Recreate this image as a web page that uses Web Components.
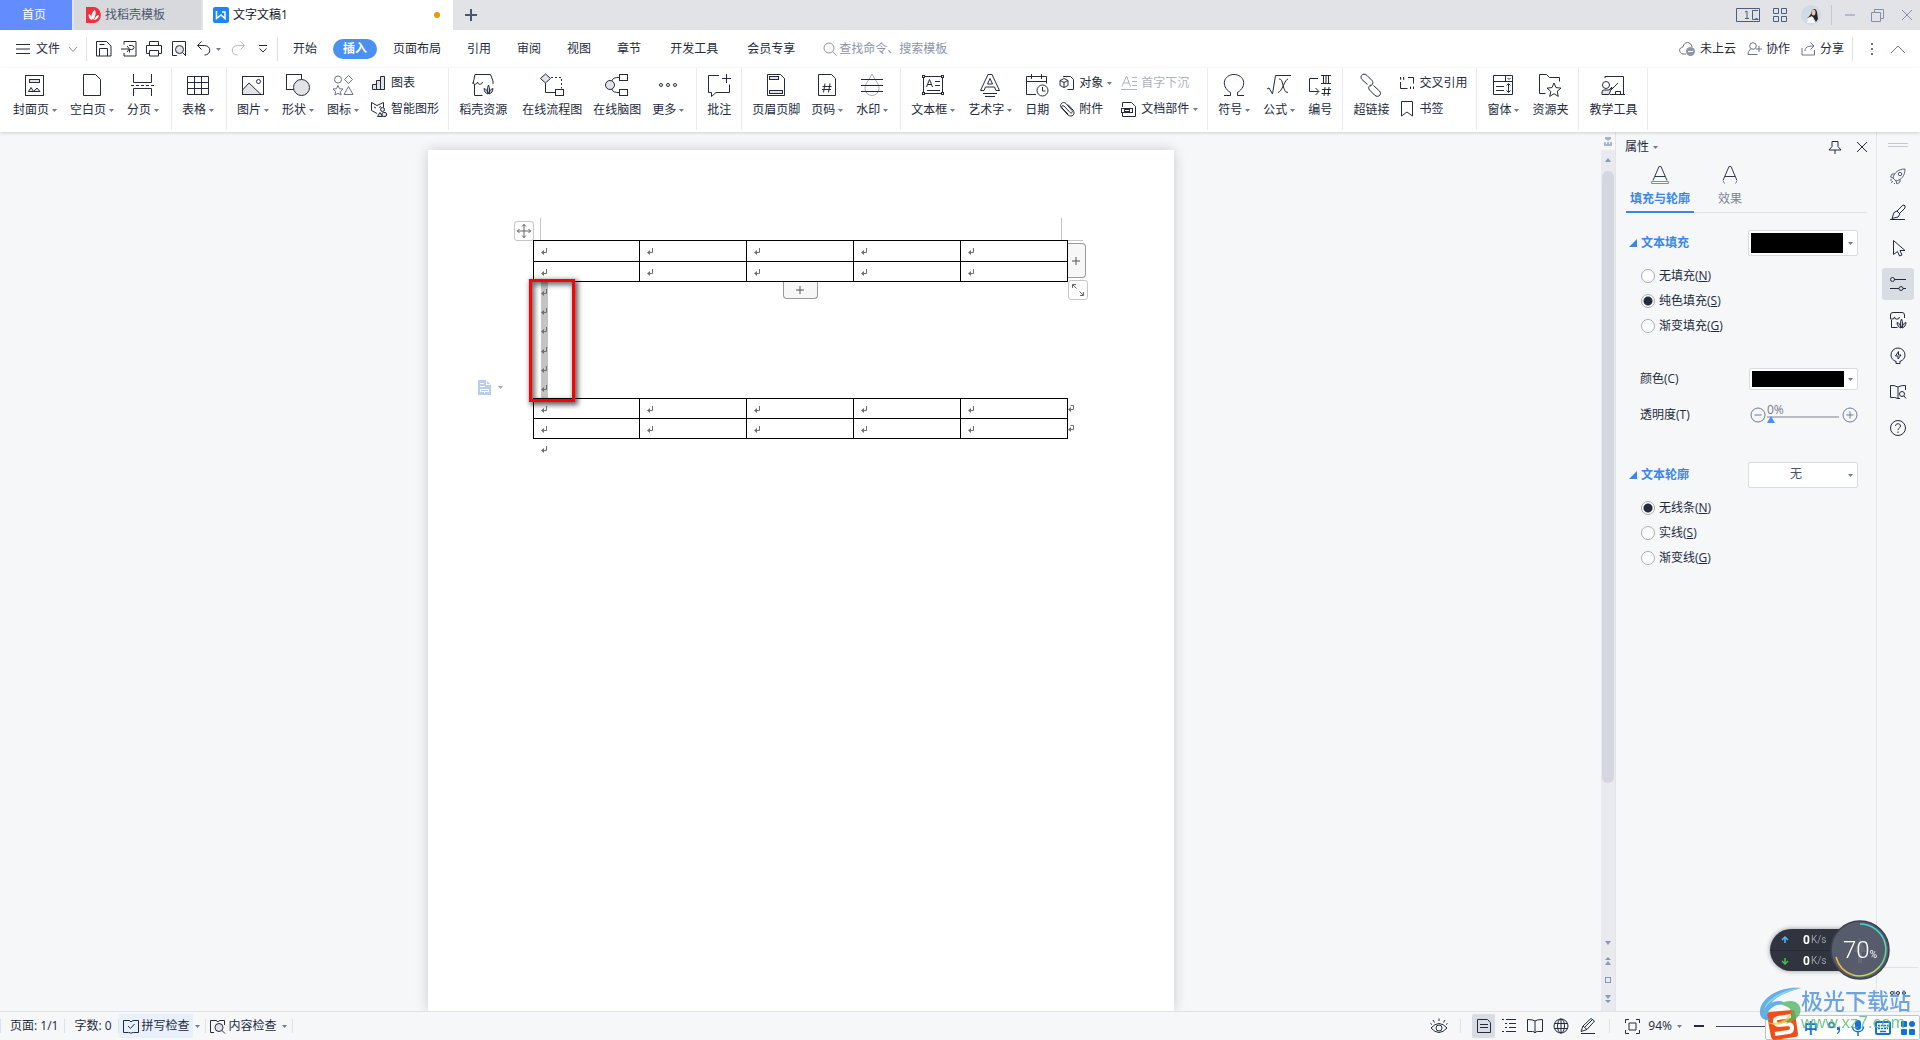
<!DOCTYPE html>
<html lang="zh-CN">
<head>
<meta charset="utf-8">
<title>文字文稿1</title>
<style>
html,body{margin:0;height:100%}
body{font:12px/18px "Open Sans","Noto Sans CJK SC",sans-serif;color:#232b3c;background:#f5f7f9;overflow:hidden}
</style>
</head>
<body>
<wps-app></wps-app>
<script>
const G='fill="#e1e3e7"', F='fill="currentColor" stroke="none"';
const leaf=(x,y)=>`<g transform="translate(${x} ${y})"><path fill="#c9ccd4" d="M5.500 9C4 7 4 3 5.500 0C7 3 7 7 5.500 9ZM5 9C2.500 8.500 1 6 1 3.500C3.500 4.500 5 6 5 9ZM6 9C6 6 7.500 4.500 10 3.500C10 6 8.500 8.500 6 9Z"/></g>`;
const ICONS={
cover:[24,24,`<rect x="2.500" y="2.500" width="18" height="20"/><rect x="6.500" y="6.500" width="10" height="3" ${G}/><path ${G} d="M5.500 18.500h5l-2.500-4zM10.500 18.500h6.500l-3-3.500z"/>`],
blank:[24,24,`<path d="M3.500 1.500h12l5 5v16h-17z"/>`],
brk:[24,24,`<path d="M2.500 1v8.500h18v-8.500M2.500 23v-7.500h18v7.500"/><path stroke-dasharray="3 2" d="M0 12.500h24"/>`],
table:[24,24,`<path d="M1.500 3.500h21v18h-21zM1.500 9.500h21M1.500 15.500h21M8.500 3.500v18M15.500 3.500v18"/>`],
pic:[24,24,`<path ${G} d="M1.500 17l6.500-7 12 11.500h-18.500z"/><rect x="1.500" y="3.500" width="21" height="18"/><circle cx="17.500" cy="8.500" r="2"/>`],
shape:[24,24,`<rect x=".5" y="1.500" width="15" height="15"/><circle cx="15.500" cy="14.500" r="8" ${G}/>`],
sym:[24,24,`<g stroke="#6a7182"><circle cx="7" cy="6.500" r="3.500"/><path d="M17.500 2.500l4 4-4 4-4-4zM17.500 13.500l4.500 8h-9zM7 12.500l1.500 3.200 3.500.4-2.600 2.400.7 3.500-3.100-1.700-3.100 1.700.7-3.500-2.600-2.400 3.500-.4z"/></g>`],
chart:[16,16,`<path ${G} d="M1.500 9.500h4v5h-4zM5.500 5.500h4v9h-4zM9.500 1.500h4v13h-4z"/>`],
smart:[16,16,`<path d="M6 12.500L.5 9.500v-8l5.500 3 6.500-3v5M3 6l2 1M8 6.500l2-1"/><circle cx="11.500" cy="8.500" r="2" ${G}/><path ${G} d="M6.500 15.500l2.500-4 2.500 4z"/><rect x="11" y="11.500" width="4.500" height="4" rx="1.500" ${G}/>`],
docer:[24,24,`<path d="M3.500 11v11.500h8M2 11L4 1.500h15.500L22 8v3M2 9c0 3 4 3 4.500 0 .5 3 4.500 3 5 0"/>${leaf(12,12)}`],
flow:[24,24,`<path ${G} d="M5.500 1l5 4.500-5 4.500-5-4.500z"/><path d="M5.500 10v9.500h9.500"/><path stroke-dasharray="2 2" d="M11 4.500h10.500v11"/><rect x="15.500" y="16.500" width="8" height="6"/>`],
mind:[24,24,`<path d="M6.500 8C8 5 10 4.500 14 4.500M6.500 16c1.500 3 3.500 3.500 7.500 3.500"/><circle cx="5" cy="12" r="4.500" ${G}/><rect x="14.500" y="1.500" width="8" height="6"/><rect x="14.500" y="16.500" width="8" height="6"/>`],
more:[24,24,`<circle cx="5" cy="12" r="1.500"/><circle cx="12" cy="12" r="1.500"/><circle cx="19" cy="12" r="1.500"/>`],
comment:[24,24,`<path d="M12 2.500H1.500v17h3v4l4.500-4h13.500v-8M19.500 1v9M15 5.500h9"/>`],
hf:[24,24,`<path d="M3.500 1.500h13l4 4v17h-17z"/><rect x="5.500" y="3.500" width="9" height="3" ${G}/><rect x="5.500" y="17.500" width="13" height="3" ${G}/>`],
pageno:[24,24,`<path d="M3.500 1.500h13l4 4v17h-17z"/><path d="M10 10.500l-1.500 9M15 10.500l-1.500 9M7.500 13.500h9M7 16.500h9"/>`],
wm:[24,24,`<path stroke="#a9adb6" d="M12 1C10 6 5 10 5 15.500a7 7 0 0 0 14 0C19 10 14 6 12 1z"/><path d="M1 6.500h22M1 12.500h22M1 18.500h22"/>`],
textbox:[24,24,`<path d="M4 3.500h16M4 20.500h16M2.500 5v14M21.500 5v14"/><rect x="1.500" y="2.500" width="2" height="2"/><rect x="20.500" y="2.500" width="2" height="2"/><rect x="1.500" y="19.500" width="2" height="2"/><rect x="20.500" y="19.500" width="2" height="2"/><path d="M5.500 14L8.500 6.500l3 7.500M6.500 11.500h4M14 8.500h5M14 12.500h5M6 17.500h13"/>`],
art:[24,24,`<path d="M2.500 17.500L10 1.500h4l7.500 16h-3.500l-1.500-3.500h-9l-1.500 3.500zM9.500 11h5L12 5.500zM5 20.500h14M7 23.500h10"/>`],
date:[24,24,`<path d="M11 21.500H1.500v-18h20v7M1.500 8.500h20M6.500 1v5M16.500 1v5"/><circle cx="17.500" cy="17.500" r="5.500"/><path d="M17.500 14v4h3"/>`],
object:[16,16,`<path d="M4 1.500h7.500l3 3v10h-6M5 3.500l4 2v5l-4 2-4-2v-5zM1 5.500l4 2 4-2M5 7.500v5"/>`],
clip:[16,16,`<path d="M5 5l6 6.500c1.500 1.500 3-.5 2-2L7 2.500C4-.5-.5 4 2.500 7l6.500 7c4 3 8-1 5-5L9 3.500M5 5c-2-1-3 .5-2 2l6 6"/>`],
dropcap:[16,16,`<path d="M1 11.500L5.500 1l4 10.500M2.500 8h5.500M11 2.500h5M11 6.500h5M11 10.500h5M0 14.500h16"/>`],
parts:[16,16,`<path d="M1.500 6V1.500h9l4 4v10h-13V12"/><rect x=".5" y="7.500" width="11" height="4"/><rect x="3.500" y="8.500" width="5" height="2"/>`],
omega:[24,24,`<path d="M2 22.500h6.500v-3C-2 13 2 1.500 12 1.500S26 13 15.500 19.500v3H22"/>`],
formula:[24,24,`<path d="M0 16l2-1 3.500 6 3-18.500H24M12 6c5-1 3 14 9 13.500M21 6c-3 0-6 13-10 13.500"/>`],
number:[24,24,`<path d="M10 5.500H1.500v13h9M7.500 15l3.500 3.500L7.500 22M13 2.500h10M13 10.500h10M15.500 2.500v8M18 2.500v8M20.500 2.500v8M17 14l-1 9M21 14l-1 9M14 16.500h9M13.500 20.500h9"/>`],
link:[24,24,`<path d="M8.500 11.500L3 6.500C0 3 4.500-1 8 2.500l5 5c2 2.500 0 5-2 5.500M14.500 12.500l6 5.500c3 3.500-1.500 7.500-5 4l-5-5c-2-2.500 0-5 2-5"/>`],
cross:[16,16,`<path d="M1.500 7v6.500h7M9 2.500h5.500v6M1.500 2v2.500M4.500 2v2.500M11.500 11.500v2.500M14.500 11.500v2.500M1.500 4h1M4.500 4h1"/>`],
mark:[16,16,`<path d="M2.500.5h11v14.500l-5.500-4-5.500 4z"/>`],
form:[24,24,`<path d="M2.500 2.500h19v19h-19zM2.500 8.500h19M14.500 2.500v6M16.500 5l1.500 1.500L19.500 5M5 13.500h8M5 17.500h8M17.500 11v8M15.500 12.500l2-2 2 2M15.500 17.500l2 2 2-2"/>`],
folder:[24,24,`<path d="M7.500 20.500h-6V1.500h7l3 3h10v4"/><path d="M16 10l2 4.600 5 .5-3.800 3.300 1.100 5-4.300-2.700-4.300 2.700 1.100-5L9 15.100l5-.5z"/>`],
teach:[24,24,`<path d="M4 5V3.500h18.500v18M9 21.500h15M14.500 21v-2.500h5v3M9 18l8-8"/><circle cx="5" cy="12" r="3.500"/><path ${G} d="M1 21.500v-2.500q0-2 2-2h5l3-3-3 7.500z"/>`],
menu:[16,12,`<path d="M1 1.500h14M1 6h14M1 10.500h14"/>`],
chev:[10,7,`<path d="M1 1l4 4.500L9 1"/>`],
up:[14,9,`<path d="M0 8l7-7 7 7"/>`],
save:[16,16,`<path d="M.5.500h10l4.500 4.500v10h-14.500zM3.500 15V7.500h8V15M3.500 3.500h5"/>`],
exp:[16,16,`<path d="M3 3.500V.5h12v14.500H3v-3M0 8h8M6 5l2.500 3L6 11M8 4.500h2.500q2.500 0 2.500 2t-2.500 2h-2v3"/>`],
print:[16,16,`<path d="M3.500 4.500v-4h9v4M3 12.500H.5v-8h15v8H13M3.500 9.500h9v5.500h-9z"/>`],
preview:[16,16,`<path d="M6 14.500H1.500V.5h13v14"/><circle cx="8.500" cy="8.500" r="4" ${G}/><path d="M11.500 11.500L15 15"/>`],
undo:[16,16,`<path d="M5.500.5L1.500 4.500l4 4M1.500 4.500h7c7 0 7 9.500 0 9.500"/>`],
cust:[10,8,`<path d="M1 .5h8M1.500 3.500l3.500 3.500 3.500-3.500"/>`],
search:[14,14,`<circle cx="6" cy="6" r="5"/><path d="M9.500 9.500L13.500 13.500"/>`],
cloud:[17,16,`<path d="M7 13H4C-1 12 0 6 4 6C5 0 12 0 13 6"/><circle cx="11.500" cy="10.500" r="4.500" fill="#8d97ac" stroke="none"/><path stroke="#fff" d="M9 10.500h5"/>`],
coop:[15,14,`<circle cx="6" cy="4" r="3.300"/><path d="M3.500 7Q1 9 1 12.500h9.500M12 4v6M9 7h6"/>`],
share:[15,14,`<path d="M1 6v7h12.500V8M4 9C4 5 7 4 13 4M9.500.5L13 4 9.500 7.500"/>`],
dots:[4,14,`<path ${F} d="M1 1h2v2H1zM1 6h2v2H1zM1 11h2v2H1z"/>`],
win:[24,14,`<path d="M.5.500h23v13H.5zM9 4l2-1v8M9 10.500h4M22 2.500h-5.500v9h6M19.500 10.500h2"/>`],
grid:[14,14,`<path d="M.5.500h5v5h-5zM8.500.5h5v5h-5zM.5 8.500h5v5h-5zM8.500 8.500h5v5h-5z"/>`],
avatar:[20,20,`<g stroke="none"><circle cx="10" cy="10" r="10" fill="#cfdbe0"/><path fill="#2a2226" d="M11 5q4-3 5 2l1 7-2 3-3-5-6 1q4-2 5-8z"/><ellipse cx="12.500" cy="7.500" rx="2" ry="3" fill="#e9c3b4"/><path fill="#f4f6f7" d="M7 13l4-2 3 7H6z"/></g>`],
min:[12,12,`<path d="M1 6h10"/>`],
restore:[13,13,`<path d="M.5 3.500h9v9h-9zM3.500 3V.5h9v9H10"/>`],
x:[12,12,`<path d="M1 1l10 10M11 1L1 11"/>`],
plus:[12,12,`<path d="M6 2v8M2 6h8"/>`],
plusb:[12,12,`<path stroke-width="2" d="M6 0v12M0 6h12"/>`],
docerlogo:[15,16,`<g stroke="none"><path fill="#f22f3e" d="M0 0h8c9 1 9 15 0 16H0z"/><path fill="#fff" d="M7 13C4 9 6 5 9 3c1 3 1 6-2 10zM6 13C3 12 2 9 3 7c2 1 3 3 3 6zM8 13c1-3 3-5 5-5 0 2-2 5-5 5z"/></g>`],
wlogo:[16,16,`<rect width="16" height="16" rx="2" fill="#1a86fb" stroke="none"/><path stroke="#fff" stroke-width="1.500" d="M3.500 4v7.500L8 8l4 3.500V5h-3"/>`],
ret:[7,8,`<path stroke="#6e6e6e" d="M5.500 1v4.500H1"/><path fill="#6e6e6e" stroke="none" d="M0 5.500l3-2.500v5z"/>`],
ret2:[7,8,`<path stroke="#6e6e6e" d="M2.500 1.500h3v4H1"/><path fill="#6e6e6e" stroke="none" d="M0 5.500l3-2.500v5z"/>`],
move:[16,16,`<g stroke="#666"><path d="M8 1v14M1 8h14M6 3.500L8 1.500l2 2M6 12.500l2 2 2-2M3.500 6L1.500 8l2 2M12.500 6l2 2-2 2"/></g>`],
resize:[16,16,`<g stroke="#666"><path d="M2.500 6V2.500H6M2.500 2.500l4 4M13.500 10v3.500H10M13.500 13.500l-4-4"/></g>`],
para:[13,15,`<g stroke="none"><path fill="#b9cdec" d="M0 0h8l5 5v10H0z"/><path fill="#fff" d="M8 0v5h5l-1-1H9V0zM2 3h4v1H2zM2 6h5v1H2zM2 9h9v3H7v1H6v-1H2zM3 10v1h7v-1z"/></g>`],
pin:[14,14,`<path d="M4 1.500h6v5l3 3.500H1l3-3.500zM7 10v4"/>`],
fillA:[20,20,`<path stroke="#333b4b" d="M3 15.500L9 1.500h2l6 14M5 11.500h10"/><path stroke="#5b93ea" d="M1.500 16.500h17v2h-17z"/>`],
effA:[20,20,`<path stroke="#333b4b" d="M3 15.500L9 1.500h2l6 14M5 11.500h10"/><path stroke="#5b93ea" d="M3.500 16v1.500l1.500 1M16.500 16v1.500l-1.500 1"/>`],
hnd:[20,4,`<path stroke="#c3c7d0" d="M0 .5h20M0 3.500h20"/>`],
rocket:[18,18,`<g stroke="#56607a"><path d="M7 14L4 11C5 6 9 2 16 2c0 7-4 11-9 12zM6 7H3L1.500 10 4 11M11 12v3l-3 2-1-3M1 13l2 0M2 16l2-2M5 17l1-1"/><circle cx="11" cy="7" r="1.700"/></g>`],
pen:[18,18,`<path d="M8 8l6-6q3 0 2 3l-6 6M8 8l3 3M3 15.500l2-6 3-1.500 3 3-2 3zM1 16.500h15"/>`],
cursor:[18,18,`<path d="M4.500 1.500v14l4-3 2 4.500 2.500-1-2-4.500h5z"/>`],
sliders:[18,18,`<path d="M5 4.500h12M1 13.500h9M14 13.500h3"/><circle cx="3.500" cy="4.500" r="2"/><circle cx="12" cy="13.500" r="2"/>`],
shop:[18,18,`<path d="M2.500 9v7.500h6M1.500 8V4q0-2.500 2.500-2.500h9q2.500 0 2.500 2.500v3M1.500 8h3l1-2 1 2h3l1-2"/>${leaf(7,8)}`],
bulb:[18,18,`<path d="M7 14.500q-5-2-5-6.500a7 7 0 0 1 14 0q0 4.500-5 6.500M7 14v2.500h4V14M9.500 4.500L6.500 9H9v3l3-4H9.500z"/>`],
book:[18,18,`<path d="M9 4Q5 2 1.500 2.500v12Q6 14 9 15.500zM9 4q4-2 7.500-1.500V7M9 15.500h2"/><circle cx="13" cy="11" r="2.500"/><path d="M15 13l2 2.500"/>`],
help:[18,18,`<circle cx="9" cy="9" r="7.500"/><path d="M6.500 7c0-3 5-3 5 0 0 2-2.500 2-2.500 4M9 12.500v1.500"/>`],
dots3:[18,6,`<circle cx="3" cy="3" r="1.500"/><circle cx="9" cy="3" r="1.500"/><circle cx="15" cy="3" r="1.500"/>`],
spell:[16,15,`<path d="M6 1.500H.5v12h5q2 0 2.500 1 .5-1 2.500-1h5v-12H11Q9 1.500 8 3 7 1.500 6 1.500M5 7l2.500 2.500L11.500 5"/>`],
content:[16,15,`<path d="M4 13.500H.5v-12H6Q7 1.500 8 3 9 1.500 10 1.500h4.500V6"/><circle cx="9" cy="8.500" r="4" ${G}/><path d="M12 11.500l3 3"/>`],
eye:[18,16,`<path d="M1 10q8-9 16 0-8 9-16 0zM9 .5v2.500M3 2l1.500 2.500M15 2l-1.500 2.500M.5 5.500l1.500 1M17.500 5.500l-1.500 1"/><circle cx="9" cy="10" r="3"/>`],
page:[16,16,`<path d="M1.500 1.500h10l3 3v10h-13zM4 6.500h8M4 9.500h8"/>`],
list:[16,16,`<path d="M1 1.500h2M5 1.500h10M4 5.500h2M8 5.500h7M4 9.500h2M8 9.500h7M1 13.500h2M5 13.500h10"/>`],
open:[16,16,`<path d="M8 3Q6 1.500.5 1.500v12h5q2 0 2.500 1.500zM8 3Q10 1.500 15.500 1.500v12h-5Q8.500 13.500 8 15"/>`],
globe:[16,16,`<circle cx="8" cy="8" r="7"/><ellipse cx="8" cy="8" rx="3.500" ry="7"/><path d="M1.500 5.500h13M1.500 10.500h13M8 1v14"/>`],
edit:[17,16,`<path d="M2 13.500l2-5.500L12 .5l3.500 2.500L8 11.500zM4 8l4 3.500M2 15.500h14M6 9l7-7"/>`],
fit:[15,15,`<path d="M.5 4V.5H4M11 .5h3.500V4M14.500 11v3.500H11M4 14.500H.5V11M4 4h7v7H4z"/>`],
minus:[10,4,`<path stroke-width="2" d="M0 2h10"/>`],
cminus:[16,16,`<circle cx="8" cy="8" r="7"/><path d="M4.500 8h7"/>`],
cplus:[16,16,`<circle cx="8" cy="8" r="7"/><path d="M4.500 8h7M8 4.500v7"/>`],
arr:[5,3,`<path ${F} d="M0 0h5L2.500 3z"/>`],
scrtop:[8,9,`<path ${F} d="M1 0h6v2L4 4 1 2zM0 5h2v2h1V5h2v2h1V5h2v4H0z"/>`],
sup:[6,4,`<path ${F} d="M0 4h6L3 0z"/>`],
sdn:[6,4,`<path ${F} d="M0 0h6L3 4z"/>`],
dup:[6,8,`<path ${F} d="M0 3h6L3 0zM0 8h6L3 4z"/>`],
ddn:[6,8,`<path ${F} d="M0 0h6L3 4zM0 5h6L3 8z"/>`],
sq:[6,6,`<rect x=".5" y=".5" width="5" height="5"/>`],
tri:[8,8,`<path ${F} d="M8 0v8H0z"/>`],
aup:[8,7,`<path stroke="#4db7ff" stroke-width="1.500" d="M4 7V1M1 4l3-3 3 3"/>`],
adn:[8,7,`<path stroke="#3fc04c" stroke-width="1.500" d="M4 0v6M1 3l3 3 3-3"/>`],
ring:[60,60,`<circle cx="30" cy="30" r="29" fill="#565c6b" stroke="#3b404c" stroke-width="1.500"/><path fill="#646a79" stroke="none" d="M30 18l6 14h-4v11h-4V32h-4z"/><path stroke-width="1.500" stroke="#3fd8d4" d="M30 4A26 26 0 0 1 54 20"/><path stroke-width="1.500" stroke="#62dca0" d="M54 20A26 26 0 0 1 50 46"/><path stroke-width="1.500" stroke="#b9dc5a" d="M50 46A26 26 0 0 1 23 55"/><path stroke-width="1.500" stroke="#f0bd45" d="M23 55A26 26 0 0 1 6 37"/>`],
sogou:[32,30,`<path fill="#f04e16" stroke="none" d="M1 5q0-3 3-3L26 0q3 0 3 3l3 21q0 3-3 3L9 30q-3 0-4-3z"/><path stroke="#fff" stroke-width="4" d="M25 6L12 8q-4 1-3 4t4 3l9-1q4 0 4 4t-4 4L9 24"/>`],
swirl:[44,40,`<g stroke="none"><path fill="#3f9fe0" d="M42 1C22-1 2 10 1 24c-1 8 6 10 11 9-6-3-4-9 2-13 5-4 14-3 15 1-1-7-10-9-17-5C19 8 31 4 42 1z"/><path fill="#72c6f4" d="M42 1C25 2 9 11 5 22 12 12 26 5 42 1z"/><path fill="#55b56a" d="M22 17c6-5 17-4 19 3 3 9-7 15-15 17 7-5 8-11 5-15-2-3-6-3-9-5z"/><path fill="#d9d93a" d="M8 35c9 3 19-1 24-9 1 9-14 16-24 9z"/></g>`],
ime2:[14,14,`<circle cx="3.500" cy="4" r="2.500" stroke="#1471d8" stroke-width="1.500"/><path fill="#1471d8" stroke="none" d="M9 6h3v3q0 3-3 4v-1q2-1 1.500-3H9z"/>`],
mic:[14,16,`<rect x="4" y="0" width="6" height="10" rx="3" fill="#1471d8" stroke="none"/><path stroke="#1471d8" stroke-width="1.500" d="M1.500 6.500c0 7 11 7 11 0M7 12v4"/>`],
kbd:[16,14,`<rect x="1" y="1" width="14" height="12" rx="1" stroke="#1471d8" stroke-width="2"/><path stroke="#1471d8" stroke-width="1.500" stroke-dasharray="2 1" d="M3 4.500h10M3 7.500h10"/><path stroke="#1471d8" stroke-width="1.500" d="M5 10.500h6"/>`],
apps:[14,14,`<g fill="#1471d8" stroke="none"><rect width="6" height="6" rx="1"/><rect x="8" width="6" height="6" rx="3"/><rect y="8" width="6" height="6" rx="1"/><rect x="8" y="8" width="6" height="6" rx="1"/></g>`]
};
const def=(tag,css,html)=>customElements.define(tag,class extends HTMLElement{
  connectedCallback(){
    if(this.shadowRoot)return;
    const r=this.attachShadow({mode:'open'});
    const t=document.createElement('template');
    t.innerHTML=`<style>*{box-sizing:border-box}button,select,input{font:inherit;color:inherit;margin:0}button{border:0;background:none;padding:0;display:flex;align-items:center}${css}</style>${typeof html==='function'?html(this):html}`;
    r.append(t.content.cloneNode(true));
  }
});
const ic=(n,s='')=>`<wps-icon name="${n}"${s?` style="${s}"`:''}></wps-icon>`;

def('wps-icon',`:host{display:inline-flex;flex:none}svg{display:block}`,e=>{
  const [w,h,c]=ICONS[e.getAttribute('name')];
  return `<svg width="${w}" height="${h}" viewBox="0 0 ${w} ${h}" fill="none" stroke="currentColor" aria-hidden="true">${c}</svg>`;
});

def('wps-titlebar',`
:host{display:flex;height:30px;background:#e1e3e7;color:#4b566d}
button{height:30px}
.home{width:72px;padding-left:22px;background:#638cff;color:#fff;margin-right:2px}
.tab{width:127px;background:#d8d9dc;padding-left:12px;gap:4px;margin-right:2px}
.tab.on{width:250px;background:#fff;color:#111827;padding:0 13px 0 10px}
.tab i{margin-left:auto;width:6px;height:6px;border-radius:50%;background:#e69b00}
.add{padding:0 10px}
.right{margin-left:auto;display:flex;align-items:center;padding-right:7px;color:#8290ae}
.dark{color:#4d5d7c}.sep{width:1px;height:20px;background:#c5c9d1;margin:0 12px 0 10px}`,
`<button class="home">首页</button><button class="tab">${ic('docerlogo')}<span>找稻壳模板</span></button><button class="tab on">${ic('wlogo')}<span>文字文稿1</span><i></i></button><button class="add" aria-label="新建">${ic('plusb')}</button>
<div class="right"><button class="dark" aria-label="窗口" style="margin-right:13px">${ic('win')}</button><button class="dark" aria-label="应用" style="margin-right:14px">${ic('grid')}</button><button aria-label="账号">${ic('avatar')}</button><span class="sep"></span><button aria-label="最小化" style="margin-right:15px">${ic('min')}</button><button aria-label="还原" style="margin-right:17px">${ic('restore')}</button><button aria-label="关闭">${ic('x')}</button></div>`);

def('wps-menubar',`
:host{display:flex;align-items:center;height:38px;background:#fff;padding:0 15px}
.file{gap:5px}.sep{width:1px;height:24px;background:#dfe1e5}
.quick{display:flex;align-items:center;gap:9px;padding:0 9px}
nav{display:flex;gap:6px;margin-left:5px}
nav button{height:20px;padding:0 10px;border-radius:10px}
nav .on{background:#4a90f2;color:#fff;font-weight:700}
nav .ext{margin-left:3px}
label{display:flex;align-items:center;gap:2px;color:#8a93a8;margin-left:18px}
input{border:0;background:none;padding:0;width:120px;outline:0}input::placeholder{color:#8a93a8;opacity:1}
.right{margin-left:auto;display:flex;align-items:center}.right button{gap:4px;margin-right:11px;color:#232b3c}.right wps-icon{color:#6a7489}`,
`<button class="file">${ic('menu')}<span>文件</span>${ic('chev','color:#8c94a3;margin-left:3px')}</button><span class="sep" style="margin-left:8px"></span>
<div class="quick"><button aria-label="保存">${ic('save')}</button><button aria-label="输出">${ic('exp')}</button><button aria-label="打印">${ic('print')}</button><button aria-label="预览">${ic('preview')}</button><button aria-label="撤销" style="gap:4px">${ic('undo')}${ic('arr','color:#6d7b96')}</button><button aria-label="恢复" style="color:#b4b8c0">${ic('undo','transform:scaleX(-1)')}</button><button aria-label="自定义" style="margin-left:3px">${ic('cust')}</button></div><span class="sep"></span>
<nav><button>开始</button><button class="on">插入</button><button>页面布局</button><button>引用</button><button>审阅</button><button>视图</button><button>章节</button><button class="ext">开发工具</button><button class="ext">会员专享</button></nav>
<label>${ic('search')}<input placeholder="查找命令、搜索模板" aria-label="查找命令"></label>
<div class="right"><button>${ic('cloud')}<span>未上云</span></button><button>${ic('coop')}<span>协作</span></button><button style="margin-right:8px">${ic('share')}<span>分享</span></button><span class="sep"></span><button aria-label="更多" style="margin:0 17px">${ic('dots')}</button><button aria-label="收起" style="margin:0">${ic('up')}</button></div>`);

def('rb-button',`:host{display:block}
button{flex-direction:column;padding:5px 5px 0 6px;gap:4px}button.a{padding-right:7px}
span{display:flex;align-items:center;gap:3px;white-space:nowrap}.arr{color:#6d7b96}
:host([wide]){padding-right:4px}`,
e=>`<button class="${e.hasAttribute('arrow')?'a':''}">${ic(e.getAttribute('icon'))}<span><slot></slot>${e.hasAttribute('arrow')?`<wps-icon class="arr" name="arr"></wps-icon>`:''}</span></button>`);
def('rb-small',`:host{display:block}
button{height:18px;padding:0 4px 0 5px;gap:4px;white-space:nowrap}.arr{color:#6d7b96}:host([disabled]) button{color:#aeb2ba}`,
e=>`<button${e.hasAttribute('disabled')?' disabled':''}>${ic(e.getAttribute('icon'))}<slot></slot>${e.hasAttribute('arrow')?`<wps-icon class="arr" name="arr"></wps-icon>`:''}</button>`);
def('rb-stack',`:host{display:flex;flex-direction:column;gap:8px;padding-top:6px}`,`<slot></slot>`);
def('rb-group',`:host{display:flex;height:62px;padding:0 5px 0 4px;border-right:1px solid #eaebee}`,`<slot></slot>`);
def('wps-ribbon',`:host{display:flex;height:64px;background:#fff;padding-left:3px;box-shadow:0 1px 3px #0000002a;position:relative;z-index:1}`,()=>{
 const b=(i,t,a)=>`<rb-button icon="${i}"${a?' arrow':''}>${t}</rb-button>`, s=(i,t,a='')=>`<rb-small icon="${i}" ${a}>${t}</rb-small>`, g=(...x)=>`<rb-group>${x.join('')}</rb-group>`, k=(...x)=>`<rb-stack>${x.join('')}</rb-stack>`;
 return g(b('cover','封面页',1),b('blank','空白页',1),b('brk','分页',1))+g(b('table','表格',1))+g(b('pic','图片',1),b('shape','形状',1),b('sym','图标',1),k(s('chart','图表'),s('smart','智能图形')))
 +g(`<rb-button wide icon="docer">稻壳资源</rb-button>`,b('flow','在线流程图'),b('mind','在线脑图'),b('more','更多',1))+g(b('comment','批注'))+g(b('hf','页眉页脚'),b('pageno','页码',1),b('wm','水印',1))
 +g(b('textbox','文本框',1),b('art','艺术字',1),b('date','日期'),k(s('object','对象','arrow'),s('clip','附件')),k(s('dropcap','首字下沉','disabled'),s('parts','文档部件','arrow')))
 +g(b('omega','符号',1),b('formula','公式',1),b('number','编号'))+g(b('link','超链接'),k(s('cross','交叉引用'),s('mark','书签')))+g(b('form','窗体',1),b('folder','资源夹'))+g(b('teach','教学工具'));
});

def('doc-table',`:host{display:block;width:535px}
table{width:100%;border-collapse:collapse;table-layout:fixed}
td{border:1px solid #000;height:20px;padding:0 0 0 7px;line-height:0;position:relative}
:host([tall]) tr:first-child td{height:21px}
.end{position:absolute;left:107px;top:5px}`,
e=>`<table aria-label="表格"><tbody>${[0,1].map(()=>`<tr>${[0,1,2,3,4].map(i=>`<td>${ic('ret')}${i==4?`<span class="end">${ic('ret2')}</span>`:''}</td>`).join('')}</tr>`).join('')}</tbody></table>`);

def('doc-page',`
:host{display:block;position:relative;width:746px;margin:18px auto 0;min-height:861px;padding:90px 0 0 105px;background:#fff;box-shadow:0 0 12px #0000002e}
.lines{display:grid;grid-template-rows:repeat(6,1fr);height:116px;padding-left:8px}
.lines span{background:#c4c4c4;width:7px;display:flex;align-items:center}
.last{padding:6px 0 0 8px;line-height:0}
.o{position:absolute}
.box{border:1px solid #c6c6c6;border-radius:3px;background:#fff;width:20px;height:20px;justify-content:center}
.g{border:1px solid #999;background:#f7f7f7;justify-content:center;color:#555}
.red{left:101px;top:129px;width:46px;height:123px;border:3px solid #f00;box-shadow:2px 2px 5px 1px #000000a0,inset 2px 2px 5px 1px #00000090}
.crop{border-left:1px solid #c6c6c6;height:22px;top:68px}
.edge{border-top:1px solid #c6c6c6;width:15px;left:640px;top:90px}`,
`<doc-table tall></doc-table><div class="lines">${`<span>${ic('ret')}</span>`.repeat(6)}</div><doc-table></doc-table><div class="last">${ic('ret')}</div>
<i class="o crop" style="left:112px"></i><i class="o crop" style="left:633px"></i><i class="o edge"></i>
<button class="o box" aria-label="移动" style="left:86px;top:71px">${ic('move')}</button>
<button class="o g" aria-label="添加行" style="left:355px;top:132px;width:35px;height:17px;border-top:0;border-radius:0 0 4px 4px">${ic('plus')}</button>
<button class="o g" aria-label="添加列" style="left:640px;top:93px;width:18px;height:35px;border-left:0;border-radius:0 4px 4px 0">${ic('plus')}</button>
<button class="o box" aria-label="调整大小" style="left:640px;top:130px">${ic('resize')}</button>
<button class="o" aria-label="段落" style="left:50px;top:230px;gap:7px;color:#aaa">${ic('para')}${ic('arr')}</button>
<i class="o red"></i>`);

def('wps-canvas',`:host{display:flex;min-width:0;overflow:hidden}
main{flex:1;min-width:0}
.bar{width:14px;background:#e8eaef;display:flex;flex-direction:column;align-items:center;color:#8a97b3}
.top{height:18px;width:14px;background:#f5f7f9;display:flex;justify-content:center;align-items:center;color:#a9b3c8}
.thumb{width:12px;height:612px;background:#d4d7e0;border-radius:6px;margin-top:9px}
.btm{margin-top:auto;display:flex;flex-direction:column;align-items:center;gap:12px;padding-bottom:8px}`,
`<main><doc-page></doc-page></main><div class="bar"><span class="top">${ic('scrtop')}</span>${ic('sup','margin-top:8px')}<span class="thumb"></span><span class="btm">${ic('sdn')}${ic('dup')}${ic('sq')}${ic('ddn')}</span></div>`);

def('prop-head',`:host{display:flex;align-items:center;height:26px;color:#3b87e8;font-weight:700}
h3{font:inherit;margin:0;display:flex;align-items:center;gap:4px;padding-left:3px}slot{display:block}
.v{margin-left:auto}`,`<h3>${ic('tri')}<slot></slot></h3><slot class="v" name="value"></slot>`);
def('prop-radio',`:host{display:flex;height:25px;align-items:center;padding-left:15px}
label{display:flex;align-items:center;gap:4px}
input{appearance:none;width:14px;height:14px;border:1px solid #a7abb5;border-radius:50%;background:#fff}
input:checked{background:radial-gradient(circle,#232b3c 0 4px,#fff 5px)}`,
e=>`<label><input type="radio"${e.hasAttribute('on')?' checked':''}><span><slot></slot>(<u>${e.getAttribute('key')}</u>)</span></label>`);
def('prop-select',`:host{display:block;position:relative;font-weight:400;color:#4b566d}
select{appearance:none;display:block;width:110px;height:26px;border:1px solid #d9dbe1;border-radius:2px;background:#fff;padding:0 26px 2px 12px;text-align:center;text-align-last:center;outline:0}
:host([swatch]) select{background:linear-gradient(#000,#000) 2px 2px/92px calc(100% - 4px) no-repeat #fff;}
:host([small]) select{width:109px;height:22px}
wps-icon{position:absolute;right:5px;top:50%;margin-top:-1px;color:#6d7b96;pointer-events:none}`,
e=>`<select aria-label="${e.getAttribute('label')}"><option>${e.getAttribute('value')||''}</option></select>${ic('arr')}`);
def('prop-panel',`
:host{display:block;width:261px;border-left:1px solid #e3e5ea;padding:4px 9px 0 9px;color:#232b3c}
header{display:flex;align-items:center;height:22px;gap:4px}
header .p{margin-left:auto;margin-right:10px}header button:last-child{margin-right:-1px}
.tabs{display:flex;border-bottom:1px solid #e0e2e7;height:55px;margin-left:1px}
.tabs button{flex-direction:column;width:68px;color:#7d8596;padding-top:7px;gap:5px;margin-right:2px;height:55px}
.tabs .on{color:#3b87e8;font-weight:700;border-bottom:2px solid #3b87e8}
section{padding:0 9px 0 1px}
section.row{display:flex;align-items:center;justify-content:space-between;padding-left:15px}
.sl{display:flex;align-items:center;color:#6d7b96}
.sl div{width:76px;display:flex;flex-direction:column;padding-left:1px}
output{color:#757b86;line-height:13px;height:13px}
input{appearance:none;height:8px;width:72px;background:linear-gradient(#b9bcc5,#b9bcc5) 0 0/100% 2px no-repeat;display:block}
input::-webkit-slider-thumb{appearance:none;width:8px;height:7px;background:#4a90f2;clip-path:polygon(50% 0,100% 100%,0 100%)}`,
`<header><span>属性</span>${ic('arr','color:#6d7b96')}<button class="p" aria-label="固定">${ic('pin')}</button><button aria-label="关闭">${ic('x')}</button></header>
<div class="tabs"><button class="on">${ic('fillA')}<span>填充与轮廓</span></button><button>${ic('effA')}<span>效果</span></button></div>
<section style="padding-top:17px"><prop-head>文本填充<prop-select slot="value" swatch label="文本填充"></prop-select></prop-head>
<div style="padding-top:7px"><prop-radio key="N">无填充</prop-radio><prop-radio on key="S">纯色填充</prop-radio><prop-radio key="G">渐变填充</prop-radio></div></section>
<section class="row" style="margin-top:30px"><span>颜色(C)</span><prop-select swatch small label="颜色"></prop-select></section>
<section class="row" style="margin-top:9px;height:28px"><label for="op" style="margin-top:4px">透明度(T)</label><div class="sl"><button aria-label="减少" style="margin-top:3px">${ic('cminus')}</button><div><output>0%</output><input id="op" type="range" value="0"></div><button aria-label="增加" style="margin-top:3px">${ic('cplus')}</button></div></section>
<section style="padding-top:35px"><prop-head>文本轮廓<prop-select slot="value" value="无" label="文本轮廓"></prop-select></prop-head>
<div style="padding-top:7px"><prop-radio on key="N">无线条</prop-radio><prop-radio key="S">实线</prop-radio><prop-radio key="G">渐变线</prop-radio></div></section>`);

def('side-rail',`:host{display:flex;flex-direction:column;align-items:center;width:44px;border-left:1px solid #e3e5ea;padding:11px 2px 0 0}
button{width:32px;height:32px;justify-content:center;border-radius:3px;margin-bottom:4px}.on{background:#d8dce3}
.grip{display:flex;margin-bottom:13px}hr{border:0;height:1px;width:100%;background:#e0e2e7;margin:auto 0 22px}
.m{height:6px;margin-bottom:15px}`,
`<span class="grip">${ic('hnd')}</span>${['rocket','pen','cursor','sliders','shop','bulb','book','help'].map(n=>`<button aria-label="${n}" class="${n=='sliders'?'on':''}">${ic(n)}</button>`).join('')}<hr><button class="m" aria-label="更多">${ic('dots3')}</button>`);

def('wps-status',`:host{display:flex;align-items:center;height:29px;border-top:1px solid #e0e2e7;background:#f5f7f9}
.sep{width:1px;height:14px;background:#dfe1e6}
.t{padding:0 6px 0 9px}
button{height:24px;gap:3px}.arr{color:#6d7b96}
.hl{background:#e8f0fb;padding:0 3px 0 4px}
.right{margin-left:auto;display:flex;align-items:center;padding-right:110px}
.v{width:26px;justify-content:center}.v.on{width:23px;background:#d8dce3;border-radius:2px;margin-right:1px}
input{appearance:none;width:94px;height:1px;background:#414b62;margin-left:12px}
input::-webkit-slider-thumb{appearance:none;width:1px;height:1px}`,
`<span class="sep"></span><span class="t">页面: 1/1</span><span class="sep"></span><span class="t">字数: 0</span><span class="sep"></span><button class="hl">${ic('spell')}<span>拼写检查</span></button>${ic('arr','color:#6d7b96;margin:0 5px 0 2px')}<span class="sep"></span><button style="padding-left:4px">${ic('content')}<span>内容检查</span></button>${ic('arr','color:#6d7b96;margin:0 5px')}<span class="sep"></span>
<div class="right"><button aria-label="护眼">${ic('eye')}</button><span class="sep" style="margin:0 11px 0 12px"></span><button class="v on" aria-label="页面视图">${ic('page')}</button><button class="v" aria-label="大纲">${ic('list')}</button><button class="v" aria-label="阅读">${ic('open')}</button><button class="v" aria-label="网页">${ic('globe')}</button><button class="v" aria-label="写作">${ic('edit')}</button><span class="sep" style="margin:0 15px 0 9px"></span><button aria-label="适应">${ic('fit')}</button><button style="margin-left:8px;gap:5px">94%${ic('arr','color:#6d7b96')}</button><button aria-label="缩小" style="margin-left:12px">${ic('minus')}</button><input type="range" value="40" aria-label="缩放"></div>`);

def('net-speed',`:host{position:fixed;right:30px;bottom:60px;display:flex;align-items:center;z-index:3;font-family:Roboto,sans-serif}
.pill{width:90px;height:42px;border-radius:21px 0 0 21px;background:#30343e;box-shadow:0 0 5px #0006;margin-right:-30px;display:grid;grid-template-rows:1fr 1fr}
.pill div{display:flex;align-items:center;padding-left:11px;color:#9a9faa;font-size:10px}
.pill div+div{border-top:1px solid #262a33}b{color:#fff;font-size:12px;margin-left:14px;margin-right:1px}
.c{position:relative;display:flex}.c p{position:absolute;inset:0;margin:0;display:flex;justify-content:center;align-items:center;color:#fff;font-weight:300;font-size:24px}
small{font-size:10px;padding-top:10px;font-weight:400}`,
`<div class="pill"><div>${ic('aup')}<b>0</b>K/s</div><div>${ic('adn')}<b>0</b>K/s</div></div><div class="c">${ic('ring')}<p>70<small>%</small></p></div>`);

def('ime-bar',`:host{position:fixed;right:0;bottom:0;box-sizing:border-box;width:155px;height:25px;display:flex;align-items:center;justify-content:space-between;background:#fff;border:1px solid #b5c6e0;border-radius:2px;padding-right:4px;z-index:2;color:#1471d8;font-weight:700;font-size:14px}
.s{display:flex;margin:-6px -4px 0 0}`,
`<span class="s">${ic('sogou')}</span><span>中</span>${ic('ime2')}${ic('mic')}${ic('kbd')}${ic('apps')}`);
def('site-mark',`:host{position:fixed;right:9px;bottom:7px;display:flex;z-index:4;opacity:.8;pointer-events:none}
div{margin-left:-2px}p{margin:0;font-size:22px;line-height:26px;color:#4a8fdc;font-weight:500;white-space:nowrap}
p+p{font:17px/20px "Liberation Sans",sans-serif;color:#54bb72}`,
`${ic('swirl')}<div><p>极光下载站</p><p>www.xz7.com</p></div>`);

def('wps-app',`:host{display:grid;grid-template-rows:auto auto auto 1fr auto;height:100vh}
.work{display:grid;grid-template-columns:1fr auto auto;min-height:0}`,
`<wps-titlebar></wps-titlebar><wps-menubar></wps-menubar><wps-ribbon></wps-ribbon><div class="work"><wps-canvas></wps-canvas><prop-panel></prop-panel><side-rail></side-rail></div><wps-status></wps-status><net-speed></net-speed><ime-bar></ime-bar><site-mark></site-mark>`);
</script>
</body>
</html>
